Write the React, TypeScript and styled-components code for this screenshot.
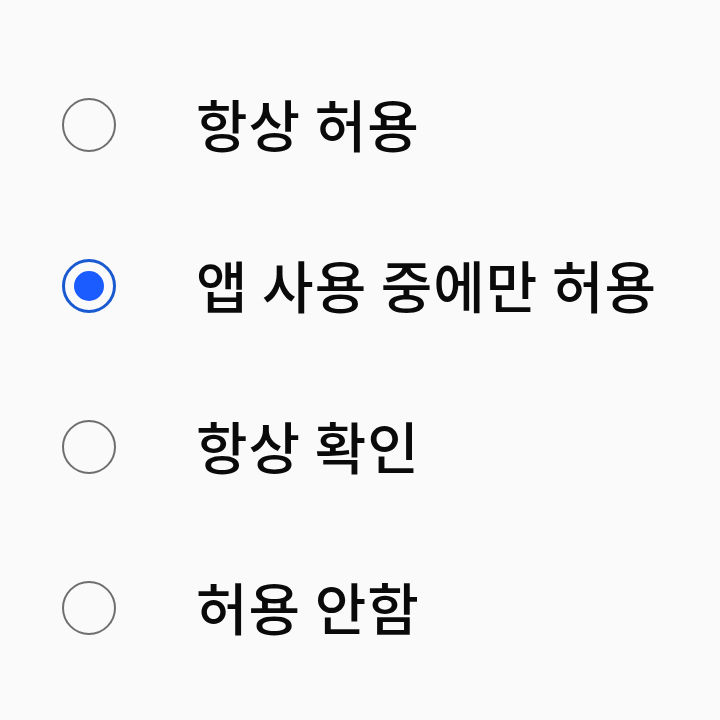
import React, { useState } from "react";
import styled, { createGlobalStyle } from "styled-components";

const GlobalStyle = createGlobalStyle`
  html, body {
    margin: 0;
    padding: 0;
    background: #fafafa;
  }
  body {
    font-family: "Noto Sans CJK KR", "Noto Sans", sans-serif;
  }
`;

const StyledPage = styled.div`
  width: 720px;
  height: 720px;
  background: #fafafa;
  overflow: hidden;
`;

const StyledList = styled.div`
  display: flex;
  flex-direction: column;
  padding-top: 44px;
`;

const StyledRow = styled.label`
  display: flex;
  align-items: center;
  height: 161px;
  padding-left: 62px;
  cursor: pointer;
`;

const StyledRadio = styled.span<{ $checked: boolean }>`
  box-sizing: border-box;
  display: flex;
  align-items: center;
  justify-content: center;
  width: 54px;
  height: 54px;
  border-radius: 50%;
  border: ${(p) => (p.$checked ? "3px solid #1a5ad1" : "2.5px solid #6e6e6e")};
  flex-shrink: 0;
`;

const StyledDot = styled.span`
  width: 30px;
  height: 30px;
  border-radius: 50%;
  background: #1a5cff;
`;

const StyledLabel = styled.span`
  margin-left: 80px;
  margin-top: -4px;
  font-size: 56px;
  line-height: 1;
  letter-spacing: 1px;
  color: #0a0a0a;
  font-weight: 500;
  white-space: nowrap;
`;

const OPTIONS = ["항상 허용", "앱 사용 중에만 허용", "항상 확인", "허용 안함"];

export default function App() {
  const [selected, setSelected] = useState(1);

  return (
    <>
      <GlobalStyle />
      <StyledPage>
        <StyledList>
          {OPTIONS.map((option, i) => (
            <StyledRow key={option} onClick={() => setSelected(i)}>
              <StyledRadio $checked={selected === i}>
                {selected === i ? <StyledDot /> : null}
              </StyledRadio>
              <StyledLabel>{option}</StyledLabel>
            </StyledRow>
          ))}
        </StyledList>
      </StyledPage>
    </>
  );
}
